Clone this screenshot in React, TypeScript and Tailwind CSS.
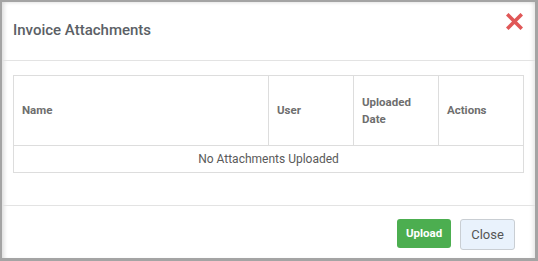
export default function App() {
  const cols = [
    { label: "Name", w: "w-[255px]" },
    { label: "User", w: "w-[85px]" },
    { label: "Uploaded Date", w: "w-[85px]" },
    { label: "Actions", w: "w-[85px]" },
  ];

  return (
    <div className="w-[538px] h-[261px] bg-[#a4a4a4] pt-[2px] pl-[2px] pr-[3px] pb-[3px] font-['Roboto',sans-serif]">
      <div className="h-full bg-white flex flex-col shadow-[inset_4px_2px_4px_-2px_rgba(0,0,0,0.14),inset_-4px_0_4px_-2px_rgba(0,0,0,0.1)]">
        {/* header */}
        <div className="h-[59px] shrink-0 border-b border-[#e3e3e3] flex justify-between pl-[11px] pr-[12px]">
          <h2 className="self-center pb-[1px] text-[15px] font-medium text-[#5b5f66]">
            Invoice Attachments
          </h2>
          <button className="mt-[11px] h-[17px] w-[17px]">
            <svg viewBox="0 0 17 17" width="17" height="17">
              <path
                d="M2.5 2.5 L14.5 14.5 M14.5 2.5 L2.5 14.5"
                stroke="#e05757"
                strokeWidth="3.6"
                strokeLinecap="square"
              />
            </svg>
          </button>
        </div>

        {/* body */}
        <div className="h-[145px] shrink-0 border-b border-[#e3e3e3] pt-[14px] pl-[11px]">
          <table className="w-[510px] table-fixed border-collapse">
            <colgroup>
              {cols.map((c) => (
                <col key={c.label} className={c.w} />
              ))}
            </colgroup>
            <thead>
              <tr className="h-[70px]">
                {cols.map((c) => (
                  <th
                    key={c.label}
                    className="border border-[#dddddd] px-[8px] text-left align-middle text-[11.5px] leading-[17px] font-bold text-[#6e6e6e]"
                  >
                    {c.label}
                  </th>
                ))}
              </tr>
            </thead>
            <tbody>
              <tr className="h-[27px]">
                <td
                  colSpan={4}
                  className="border border-[#dddddd] text-center text-[12px] text-[#5a5a5a]"
                >
                  No Attachments Uploaded
                </td>
              </tr>
            </tbody>
          </table>
        </div>

        {/* footer */}
        <div className="flex-1 flex justify-end items-start gap-[9px] pt-[13px] pr-[20px]">
          <button className="h-[29px] w-[54px] rounded-[3px] bg-[#4cae50] text-white text-[11.5px] font-bold">
            Upload
          </button>
          <button className="h-[31px] w-[55px] rounded-[3px] border border-[#c9ced3] bg-[#e9f2fc] text-[13px] text-[#555]">
            Close
          </button>
        </div>
      </div>
    </div>
  );
}
